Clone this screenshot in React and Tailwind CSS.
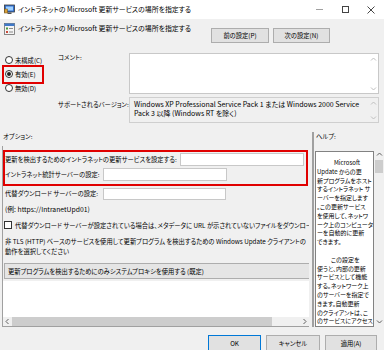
function Chevron({ dir = 'up', className = '' }) {
  const d = {
    up: 'M1 4.5 L3.5 2 L6 4.5',
    down: 'M1 2.5 L3.5 5 L6 2.5',
    left: 'M4.5 1 L2 3.5 L4.5 6',
    right: 'M2.5 1 L5 3.5 L2.5 6',
  }[dir]
  return (
    <svg width="7" height="7" viewBox="0 0 7 7" className={className}>
      <path d={d} fill="none" stroke="currentColor" strokeWidth="1" />
    </svg>
  )
}

function TitleIcon() {
  return (
    <svg width="11" height="11" viewBox="0 0 11 11" className="ml-[4px]">
      <rect x="0.5" y="1" width="10" height="7" fill="#2f6fd0" stroke="#3a3a3a" strokeWidth="0.8" />
      <rect x="2" y="2.5" width="7" height="4" fill="#9fd0ff" />
      <rect x="3.5" y="8.5" width="4" height="1.5" fill="#555" />
      <rect x="0.5" y="5" width="3" height="4" fill="#d9a13a" stroke="#6b4a10" strokeWidth="0.5" />
    </svg>
  )
}

function PolicyIcon() {
  return (
    <svg width="11" height="12" viewBox="0 0 11 12">
      <rect x="0.5" y="0.5" width="10" height="11" fill="#f4f4f4" stroke="#6d6d6d" strokeWidth="0.8" />
      <rect x="0.5" y="0.5" width="10" height="2.5" fill="#3f78c8" />
      <rect x="2" y="4.5" width="2" height="2" fill="#4a9a3a" />
      <rect x="5" y="5" width="4" height="1" fill="#8a8a8a" />
      <rect x="2" y="8" width="2" height="2" fill="#c94a3a" />
      <rect x="5" y="8.5" width="4" height="1" fill="#8a8a8a" />
    </svg>
  )
}

function Radio({ checked, label }) {
  return (
    <div className="flex h-[14px] items-center gap-[2px] pl-[5px]">
      <span className="flex h-[8px] w-[8px] items-center justify-center rounded-full border border-[#333] bg-white">
        {checked && <span className="h-[4px] w-[4px] rounded-full bg-[#222]" />}
      </span>
      <span>{label}</span>
    </div>
  )
}

const helpLines = [
  { t: 'Microsoft', pad: 'pl-[17px]' },
  { t: 'Update からの更' },
  { t: '新プログラムをホスト' },
  { t: 'するイントラネット サ' },
  { t: 'ーバーを指定します' },
  { t: '。この更新サービス' },
  { t: 'を使用して、ネットワ' },
  { t: 'ーク上のコンピュータ' },
  { t: 'ーを自動的に更新' },
  { t: 'できます。' },
  { t: '\u00a0' },
  { t: 'この設定を', pad: 'pl-[14px]' },
  { t: '使うと、内部の更新' },
  { t: 'サービスとして機能' },
  { t: 'する。ネットワーク上' },
  { t: 'のサーバーを指定で' },
  { t: 'きます。自動更新' },
  { t: 'のクライアントは、こ' },
  { t: 'のサービスにアクセス' },
  { t: 'し、ネットワーク上の' },
]

export default function App() {
  return (
    <div className="flex h-[350px] w-[384px] flex-col overflow-hidden bg-[#f0f0f0] font-['Noto_Sans_CJK_JP',sans-serif] text-[6.3px] leading-[9px] text-black [font-feature-settings:'palt']">
      {/* title bar */}
      <div className="flex h-[19px] shrink-0 items-center bg-white">
        <TitleIcon />
        <span className="ml-[3px] text-[6.9px]">イントラネットの Microsoft 更新サービスの場所を指定する</span>
        <div className="ml-auto flex h-full items-center">
          <div className="flex w-[26px] justify-center">
            <span className="h-px w-[7px] bg-[#a0a0a0]" />
          </div>
          <div className="flex w-[26px] justify-center">
            <span className="h-[7px] w-[7px] border border-[#444]" />
          </div>
          <div className="flex w-[26px] justify-center">
            <svg width="8" height="8" viewBox="0 0 8 8">
              <path d="M0.5 0.5 L7.5 7.5 M7.5 0.5 L0.5 7.5" stroke="#333" strokeWidth="0.9" />
            </svg>
          </div>
        </div>
      </div>

      {/* header */}
      <div className="flex h-[33px] shrink-0">
        <div className="mt-[3px] flex h-[13px] items-center gap-[3px] pl-[4px]">
          <PolicyIcon />
          <span className="text-[6.9px]">イントラネットの Microsoft 更新サービスの場所を指定する</span>
        </div>
        <div className="ml-auto mr-[54px] mt-[9px] flex gap-[4px]">
          <button type="button" className="h-[15px] w-[58px] border border-[#adadad] bg-[#e1e1e1]">
            前の設定(P)
          </button>
          <button type="button" className="h-[15px] w-[57px] border border-[#adadad] bg-[#e1e1e1]">
            次の設定(N)
          </button>
        </div>
      </div>

      {/* state + comment */}
      <div className="flex h-[74px] shrink-0">
        <div className="relative w-[56px] pt-px">
          <Radio label="未構成(C)" />
          <Radio checked label="有効(E)" />
          <Radio label="無効(D)" />
          <div className="absolute left-[2px] top-[13px] h-[19px] w-[42px] border-2 border-[#e00000]" />
        </div>
        <div className="flex flex-col pt-px">
          <div className="flex h-[41px]">
            <div className="w-[73px] pl-[2px]">コメント:</div>
            <div className="relative h-[41px] w-[250px] border border-[#c8c8c8] bg-white">
              <Chevron dir="up" className="absolute right-[1px] top-[2px] text-[#c0c0c0]" />
              <Chevron dir="down" className="absolute bottom-[1px] right-[1px] text-[#c0c0c0]" />
            </div>
          </div>
          <div className="mt-[3px] flex h-[26px]">
            <div className="w-[73px] pl-[2px] pt-[3px]">サポートされるバージョン:</div>
            <div className="relative h-[26px] w-[250px] border border-[#cfcfcf] bg-[#f0f0f0] px-[4px] pt-[2px] text-[7px]">
              <div>Windows XP Professional Service Pack 1 または Windows 2000 Service</div>
              <div>Pack 3 以降 (Windows RT を除く)</div>
              <Chevron dir="up" className="absolute right-[1px] top-[2px] text-[#c0c0c0]" />
              <Chevron dir="down" className="absolute bottom-[1px] right-[1px] text-[#c0c0c0]" />
            </div>
          </div>
        </div>
      </div>

      {/* options + help */}
      <div className="flex h-[203px] shrink-0">
        <div className="w-[311px]">
          <div className="flex h-[20px] items-center pl-[3px]">オプション:</div>
          <div className="ml-[2px] flex h-[181px] w-[307px] flex-col border-b border-l border-[#a0a0a0] bg-white">
            <div className="h-[171px] overflow-hidden">
              <div className="bg-[#f0f0f0] pb-[2px] pt-[4px] whitespace-nowrap">
                <div className="w-[305px] border-2 border-[#e00000]">
                  <div className="flex h-[15px] items-center">
                    <span>更新を検出するためのイントラネットの更新サービスを設定する:</span>
                    <span className="ml-auto mr-[2px] h-[13px] w-[124px] border border-[#c8c8c8] bg-white" />
                  </div>
                  <div className="flex h-[15px] items-center">
                    <span className="w-[98px]">イントラネット統計サーバーの設定:</span>
                    <span className="h-[13px] w-[124px] border border-[#c8c8c8] bg-white" />
                  </div>
                  <div className="h-[2px]" />
                </div>
                <div className="flex h-[15px] items-center">
                  <span className="w-[100px] pl-[2px]">代替ダウンロード サーバーの設定:</span>
                  <span className="h-[12px] w-[123px] border border-[#c8c8c8] bg-white" />
                </div>
                <div className="flex h-[16px] items-center pl-[2px] text-[6.8px]">(例: https://IntranetUpd01)</div>
                <div className="flex h-[16px] items-center gap-[3px] pl-px">
                  <span className="h-[8px] w-[8px] shrink-0 border border-[#333] bg-white" />
                  <span>代替ダウンロード サーバーが設定されている場合は、メタデータに URL が示されていないファイルをダウンロードします</span>
                </div>
                <div className="mt-[4px] pl-[2px] leading-[10px]">
                  <div>非 TLS (HTTP) ベースのサービスを使用して更新プログラム を検出するための Windows Update クライアントの</div>
                  <div>動作を選択してください</div>
                </div>
                <div className="ml-px mt-[6px] flex h-[16px] w-[340px] items-center border border-[#adadad] bg-[#e5e5e5] pl-[3px]">
                  更新プログラムを検出するためにのみシステムプロキシを使用する (既定)
                </div>
              </div>
            </div>
            <div className="flex h-[9px] items-center bg-[#f0f0f0]">
              <div className="flex w-[9px] justify-center text-[#606060]">
                <Chevron dir="left" />
              </div>
              <div className="h-full flex-1 bg-[#cdcdcd]" />
              <div className="w-[28px]" />
              <div className="flex w-[9px] justify-center text-[#606060]">
                <Chevron dir="right" />
              </div>
            </div>
          </div>
        </div>

        <div className="ml-px mt-[6px] h-[195px] w-[2px] bg-[#a0a0a0]" />

        <div className="flex-1">
          <div className="flex h-[20px] items-center pl-[2px]">ヘルプ:</div>
          <div className="mt-[5px] flex">
            <div className="ml-px h-[176px] w-[59px] overflow-hidden border border-[#828282] bg-white px-px pt-[7px] text-[6px] leading-[8.8px] whitespace-nowrap">
              {helpLines.map((l, i) => (
                <div key={i} className={l.pad || ''}>
                  {l.t}
                </div>
              ))}
            </div>
            <div className="flex h-[176px] w-[10px] flex-col items-center">
              <Chevron dir="up" className="text-[#606060]" />
              <div className="mt-[2px] h-[13px] w-[8px] bg-[#cdcdcd]" />
              <div className="flex-1" />
              <Chevron dir="down" className="mb-[2px] text-[#606060]" />
            </div>
          </div>
        </div>
      </div>

      {/* footer buttons */}
      <div className="mt-[6px] flex justify-end gap-[5px] pr-[7px]">
        <button type="button" className="h-[16px] w-[53px] border border-[#0078d7] bg-[#e1e1e1]">
          OK
        </button>
        <button type="button" className="h-[16px] w-[54px] border border-[#adadad] bg-[#e1e1e1]">
          キャンセル
        </button>
        <button type="button" className="h-[16px] w-[52px] border border-[#adadad] bg-[#e1e1e1]">
          適用(A)
        </button>
      </div>
    </div>
  )
}
